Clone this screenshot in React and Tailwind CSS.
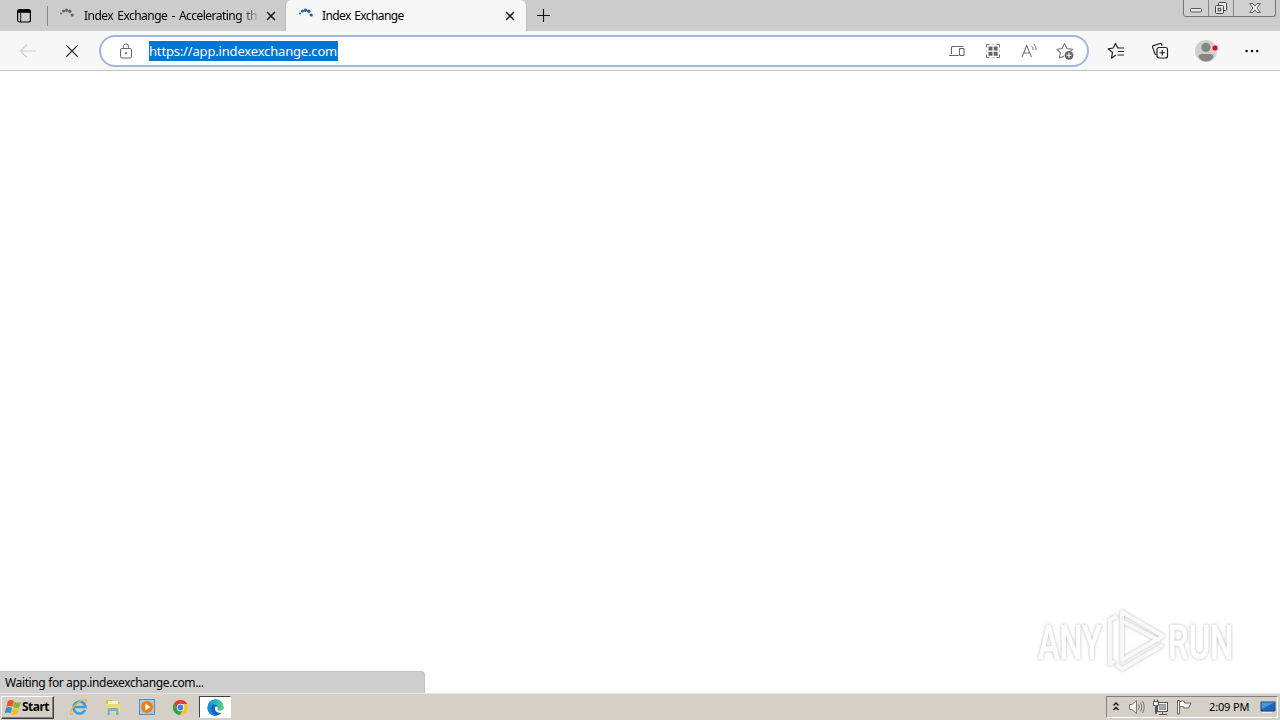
import React from 'react';

const Spinner = ({ color }) => (
  <svg width="16" height="16" viewBox="0 0 16 16" className="shrink-0" fill={color}>
    <circle cx="2" cy="5.500" r="1" />
    <circle cx="4.500" cy="3" r="1.500" />
    <circle cx="7.500" cy="2.200" r="1.700" />
    <circle cx="10.800" cy="3.200" r="1.700" />
    <circle cx="13.200" cy="7" r="1.600" />
  </svg>
);

const Cross = ({ size, width }) => (
  <svg width={size} height={size} viewBox="0 0 10 10" stroke="#111" strokeWidth={width} className="block shrink-0">
    <path d="M1 1l8 8M9 1L1 9" />
  </svg>
);

const TabStrip = () => (
  <div className="flex h-[31px] shrink-0 items-stretch bg-[#cccccc] text-[12px] text-black">
    <div className="flex w-[47px] items-center justify-center pt-px">
      <svg width="16" height="16" viewBox="0 0 16 16" fill="none" stroke="#000">
        <rect x="1.600" y="1.600" width="12.800" height="12.400" rx="2" strokeWidth="1.200" />
        <path d="M2 3.300h12" strokeWidth="3" />
        <path d="M4.700 5v9" strokeWidth="0.900" />
      </svg>
    </div>
    <div className="flex w-[238px] items-center pt-px">
      <div className="mr-[11px] h-[20px] w-px shrink-0 bg-[#858585]" />
      <Spinner color="#666" />
      <span className="ml-[9px] w-[174px] shrink-0 whitespace-nowrap bg-gradient-to-r from-black from-88% to-[#b5b5b5] bg-clip-text tracking-[-0.520px] text-transparent [word-spacing:1.500px]">Index Exchange - Accelerating th</span>
      <span className="ml-[8px]"><Cross size={10} width={1.5} /></span>
    </div>
    <div className="flex w-[242px] items-center rounded-t-[6px] border-x border-[#bdbdbd] bg-[#f7f7f7] pl-[12px] pr-[11px] pt-px">
      <Spinner color="#1b5f9e" />
      <span className="ml-[8px] flex-1 whitespace-nowrap tracking-[-0.600px] [word-spacing:1px]">Index Exchange</span>
      <Cross size={10} width={1.5} />
    </div>
    <div className="flex flex-1 items-center pl-[9px]">
      <svg width="15" height="15" viewBox="0 0 15 15" stroke="#111" strokeWidth="1.1">
        <path d="M7.500 1v13M1 7.500h13" />
      </svg>
    </div>
    <div className="mr-[4px] flex h-[17px] w-[93px] rounded-b-[3px] border border-t-0 border-[#777] bg-[#d0d0d0]">
      <div className="flex w-[25px] justify-center border-r border-[#888]">
        <svg width="14" height="16" viewBox="0 0 14 16"><rect x="1.500" y="8.500" width="11" height="3.500" rx="1" fill="#e8e8e8" stroke="#555" /></svg>
      </div>
      <div className="flex w-[25px] justify-center border-r border-[#888]">
        <svg width="14" height="16" viewBox="0 0 14 16" fill="#e8e8e8" stroke="#444">
          <rect x="4.500" y="2.500" width="8" height="8" rx="1" />
          <rect x="1.500" y="5.500" width="8" height="8" rx="1" />
          <rect x="4.200" y="8.200" width="2.600" height="2.600" />
        </svg>
      </div>
      <div className="flex flex-1 justify-center">
        <svg width="14" height="16" viewBox="0 0 14 16" fill="#ececec" stroke="#555" strokeWidth="0.9">
          <path d="M1.500 3.500h3.300L7 6l2.200-2.500h3.300L9 8l3.500 4.500H9.200L7 10l-2.200 2.500H1.500L5 8z" />
        </svg>
      </div>
    </div>
  </div>
);

const AddressBar = () => (
  <div className="flex h-[32px] w-[990px] items-center rounded-full border-2 border-[#9db8de] bg-white">
    <svg width="14" height="16" viewBox="0 0 14 16" fill="none" stroke="#666" strokeWidth="1" className="ml-[18px]">
      <rect x="1.500" y="5.500" width="11" height="9.500" rx="1.500" />
      <path d="M4.300 5.500V3.600a2.700 2.700 0 0 1 5.400 0v1.900" />
      <circle cx="7" cy="10.200" r="0.600" fill="#555" />
    </svg>
    <span className="ml-[16px] block h-[20px] w-[189px] whitespace-nowrap bg-[#0075d2] text-[13px] leading-[21px] tracking-[-0.170px] text-white">https://app.indexexchange.com</span>
    <div className="ml-auto flex items-center gap-[20px] pr-[13px]">
      <svg width="16" height="16" viewBox="0 0 16 16" fill="none" stroke="#666" strokeWidth="1.100">
        <path d="M2.500 11V4.500q0-1 1-1h11M0 12.500h9.500" />
        <rect x="10.500" y="5.500" width="4.500" height="7" rx="0.700" />
      </svg>
      <svg width="16" height="16" viewBox="0 0 16 16" fill="none" stroke="#777">
        <path d="M1.500 4.500v-3h3M11.500 1.500h3v3M14.500 11.500v3h-3M4.500 14.500h-3v-3" />
        <path d="M6.500 1.500h3M6.500 14.500h3M1.500 6.500v3M14.500 6.500v3" stroke="#bbb" />
        <path d="M3.500 3.500h4v4h-4zM8.700 3.500h4v4h-4zM3.500 8.700h4v4h-4zM8.700 8.700h4v4h-4z" fill="#666" stroke="none" />
      </svg>
      <svg width="17" height="16" viewBox="0 0 17 16" fill="none" stroke="#777">
        <path d="M1 14L5.700 2.500 10.400 14M2.700 10h6" strokeWidth="1.100" />
        <path d="M10.500 3q2 1.500 1.500 4M12.500 .8q3.500 2.700 2.500 6.500" strokeWidth="1" />
      </svg>
      <svg width="18" height="18" viewBox="0 0 18 18" fill="none" stroke="#777" className="-ml-[2px]">
        <path d="M8 14l-4.500 2 .8-5.500L1 7.300l5-.8L8.500 1.500 11 6.500l5.500.8-2 2" strokeWidth="1.100" strokeLinejoin="round" />
        <circle cx="13" cy="13.300" r="4.400" fill="#666" stroke="none" />
        <path d="M10.500 13.300h5M13 10.800v5" stroke="#fff" strokeWidth="1.100" />
      </svg>
    </div>
  </div>
);

const Toolbar = () => (
  <div className="flex h-[40px] shrink-0 items-center border-b border-[#c4c2c8] bg-[#f7f7f7]">
    <svg width="18" height="16" viewBox="0 0 18 16" fill="none" stroke="#cfcfcf" strokeWidth="1.200" className="ml-[19px]">
      <path d="M17 8H2M8 1.500L1.500 8 8 14.500" />
    </svg>
    <span className="ml-[28px] mr-[20px]"><Cross size={14} width={0.8} /></span>
    <AddressBar />
    <div className="ml-[18px] flex items-center">
      <svg width="18" height="18" viewBox="0 0 18 18" fill="none" stroke="#222" strokeWidth="1.200" strokeLinejoin="round">
        <path d="M9 13l-4.500 3.200 1-5.700L1.200 6.800l5-.8L8.500 1.500 10.700 6H17M11 9.500h6M10.500 13H17" />
      </svg>
      <svg width="18" height="18" viewBox="0 0 18 18" fill="none" stroke="#222" strokeWidth="1.200" className="ml-[26px]">
        <path d="M5.500 12.500L4 12 1.600 5.200q-.3-1.200.8-1.600L9 1.500q1-.3 1.500.7l.6 1.600" />
        <rect x="6" y="5.500" width="10.500" height="10.500" rx="2" />
        <path d="M11.250 8v5.500M8.500 10.750H14" />
      </svg>
      <svg width="24" height="24" viewBox="0 0 24 24" className="ml-[25px]">
        <circle cx="12" cy="12" r="11" fill="#d2d0ce" />
        <circle cx="12" cy="8.500" r="4.700" fill="#888684" />
        <path d="M4.500 18q0-3 4-3h7q4 0 4 3-3 4.500-7.500 4.500T4.500 18" fill="#888684" />
        <circle cx="21" cy="9" r="3" fill="#d9101c" stroke="#fff" strokeWidth="0.500" />
      </svg>
      <svg width="16" height="6" viewBox="0 0 16 6" className="ml-[26px]" fill="#111">
        <circle cx="2.600" cy="3" r="1.300" /><circle cx="8" cy="3" r="1.300" /><circle cx="13.200" cy="3" r="1.300" />
      </svg>
    </div>
  </div>
);

const Watermark = () => (
  <svg width="210" height="74" viewBox="0 0 210 74" className="absolute bottom-[14px] right-[39px] overflow-visible drop-shadow-[0_0_1.5px_#b8b8b8]">
    <defs>
      <linearGradient id="fade" x1="0" y1="16" x2="0" y2="54" gradientUnits="userSpaceOnUse">
        <stop offset="60%" stopColor="#fff" />
        <stop offset="60%" stopColor="#efefef" />
      </linearGradient>
    </defs>
    <g fill="url(#fade)" stroke="url(#fade)" strokeWidth="0.500" fontFamily="Roboto, sans-serif" fontSize="49" fontWeight="500">
      <text transform="translate(7 54) scale(.66 1)">ANY</text>
      <text transform="translate(137 54) scale(.67 1)">RUN</text>
    </g>
    <g fill="none" stroke="#f8f8f8" strokeWidth="4" strokeLinejoin="round">
      <path d="M91 7v48l41-24z" />
      <path d="M86 11l-7 4v44l5-3M85 59l6 5 41-24M91 16l38 20" />
    </g>
  </svg>
);

const Taskbar = () => (
  <div className="flex h-[27px] shrink-0 items-center border-t border-[#e8e5df] bg-[#d4d0c8]">
    <div className="ml-px flex h-[23px] w-[53px] items-center border border-b-[#404040] border-l-white border-r-[#404040] border-t-white pl-[2px] shadow-[inset_-1px_-1px_#808080]">
      <svg width="18" height="17" viewBox="0 0 17 16" className="shrink-0">
        <path d="M3.500 2q3-2 6 0L8 7.300q-3-1.500-5.800 0z" fill="#e8582a" />
        <path d="M10 2.500q3 2 6 0L14.500 7.800q-3 1.500-6 0z" fill="#83b536" />
        <path d="M1.900 8.300q2.700-1.500 5.800 0L6.200 13.500q-3-1.500-5.500 0z" fill="#398bd0" />
        <path d="M8.300 8.700q3 1.500 6 0L12.800 14.200q-3 1.500-6 0z" fill="#f5bd24" />
      </svg>
      <span className="text-[12px] font-bold tracking-[-0.500px] text-black">Start</span>
    </div>
    <div className="flex items-center pl-[16px]">
      <svg width="18" height="18" viewBox="0 0 18 18" fill="none">
        <path d="M15 12a6 6 0 1 1 .5-3H5" stroke="#3ca0dc" strokeWidth="2.600" />
        <path d="M3 15.500C-1 19-.5 12 5 7 10 2 18-1 16.500 4.500" stroke="#e7b72d" strokeWidth="1.300" />
      </svg>
      <svg width="18" height="18" viewBox="0 0 18 18" className="ml-[16px]">
        <path d="M2 2h6l1 2h7v10H2z" fill="#e2bd58" />
        <path d="M4 3h10v4H4z" fill="#faf5cf" />
        <path d="M2 6h14v9H2z" fill="#f0d778" />
        <path d="M3.500 17v-5q0-2 2-2h7q2 0 2 2v5h-2.500v-4H6v4z" fill="#6fb5d9" />
      </svg>
      <svg width="18" height="18" viewBox="0 0 18 18" className="ml-[16px]">
        <rect x="1.500" y="1.500" width="15" height="15" fill="#a5cce9" stroke="#568cb5" />
        <circle cx="9" cy="9" r="6" fill="#ef7b13" />
        <path d="M7.300 5.500v7L12.500 9z" fill="#fff" />
      </svg>
      <svg width="17" height="17" viewBox="0 0 17 17" className="ml-[16px] mr-px">
        <circle cx="8.500" cy="8.500" r="7.700" fill="#f9c52c" />
        <path d="M1.800 4.700A7.700 7.700 0 0 1 15.200 5H8.500l-3.400 5.200z" fill="#df3c32" />
        <path d="M1.800 4.700A7.700 7.700 0 0 0 7.600 16.200l4-6.400H5.200z" fill="#31a451" />
        <circle cx="8.500" cy="8.500" r="3.700" fill="#fff" /><circle cx="8.500" cy="8.500" r="2.900" fill="#397fed" />
      </svg>
      <div className="ml-[9px] flex h-[22px] w-[32px] items-center justify-center border border-b-white border-l-[#404040] border-r-white border-t-[#404040] bg-white">
        <svg width="17" height="17" viewBox="0 0 17 17">
          <defs>
            <linearGradient id="edge" x1="0" y1="0" x2="1" y2="0">
              <stop stopColor="#1593d8" />
              <stop offset=".5" stopColor="#20b6d1" />
              <stop offset="1" stopColor="#67d862" />
            </linearGradient>
          </defs>
          <circle cx="8.500" cy="8.500" r="8" fill="#1266b7" />
          <path d="M.5 8.500A8 8 0 0 1 16.500 8q0 3.500-4 3.500-3 0-1.700-1.500Q11.500 6 7.500 5.500 2 5 .5 8.500" fill="url(#edge)" />
          <path d="M.5 8.500q1.500-3 5.500-2-3 3-1 6.500t6 3.600A8 8 0 0 1 .5 8.500" fill="#168bd0" />
          <path d="M8.300 7.500q2.700-.5 2.700 1.500-1.200 2.500 1.500 2.500 2 0 3.500-1.200l1 1-1.500 2.200Q13 14.800 10 13 7 11 8.300 7.500" fill="#fff" />
        </svg>
      </div>
    </div>
    <div className="ml-auto mr-[2px] flex h-[22px] w-[172px] items-center border border-b-white border-l-[#808080] border-r-white border-t-[#808080] pl-[5px]">
      <svg width="8" height="12" viewBox="0 0 8 12" fill="none" stroke="#111" strokeWidth="1.400"><path d="M1.500 4.500L4 2l2.500 2.500M1.500 9L4 6.500 6.500 9" /></svg>
      <svg width="17" height="16" viewBox="0 0 17 16" fill="#f5f5f5" stroke="#777" className="ml-[8px]">
        <path d="M1.500 5.500h2.500L8.500 1.500v13L4 10.500H1.500z" />
        <path d="M10.500 5.500q1.800 2.500 0 5M12.500 3.500q3 4.500 0 9M14.500 2q3.500 6 0 12" fill="none" />
      </svg>
      <svg width="17" height="17" viewBox="0 0 17 17" fill="#f4f4f4" stroke="#555" className="ml-[7px]">
        <rect x="5.500" y="3.500" width="10" height="9" /><rect x="7.500" y="5.500" width="6" height="5" fill="#aaa" stroke="#999" />
        <path d="M7 15.500h8M10.500 13v2" />
        <path d="M1.500 2.500h5v4h-2v8h-1v-8h-2zM2.500 .5v2M5.500 .5v2" />
      </svg>
      <svg width="17" height="16" viewBox="0 0 17 16" fill="#f7f7f7" stroke="#666" className="ml-[7px]">
        <path d="M1.500 15V1.500h2V15zM3.500 2.500q3-1 5 0v1.500h6.500L12.500 9H8V8Q6 7 3.500 8z" />
      </svg>
      <span className="ml-[16px] whitespace-nowrap text-[11px] tracking-[-0.150px] text-black">2:09 PM</span>
      <svg width="17" height="16" viewBox="0 0 17 16" className="ml-auto">
        <path d="M1 3h14v9H1z" fill="#1f65bc" stroke="#184a83" /><path d="M1.500 3.500h13L2 10z" fill="#4c98df" />
        <path d="M2 13.500h10" stroke="#eee" />
      </svg>
    </div>
  </div>
);

const App = () => (
  <div className="flex h-[720px] w-[1280px] flex-col overflow-hidden bg-white font-['Noto_Sans',sans-serif]">
    <TabStrip />
    <Toolbar />
    <main className="relative flex-1 bg-white">
      <Watermark />
      <div className="absolute bottom-0 left-0 flex h-[22px] w-[425px] items-center rounded-tr-[4px] border-r border-t border-[#c4c4c4] bg-[#cecece] pl-[5px] text-[12px] tracking-[-0.370px] text-black">
        Waiting for app.indexexchange.com...
      </div>
    </main>
    <Taskbar />
  </div>
);

export default App;
